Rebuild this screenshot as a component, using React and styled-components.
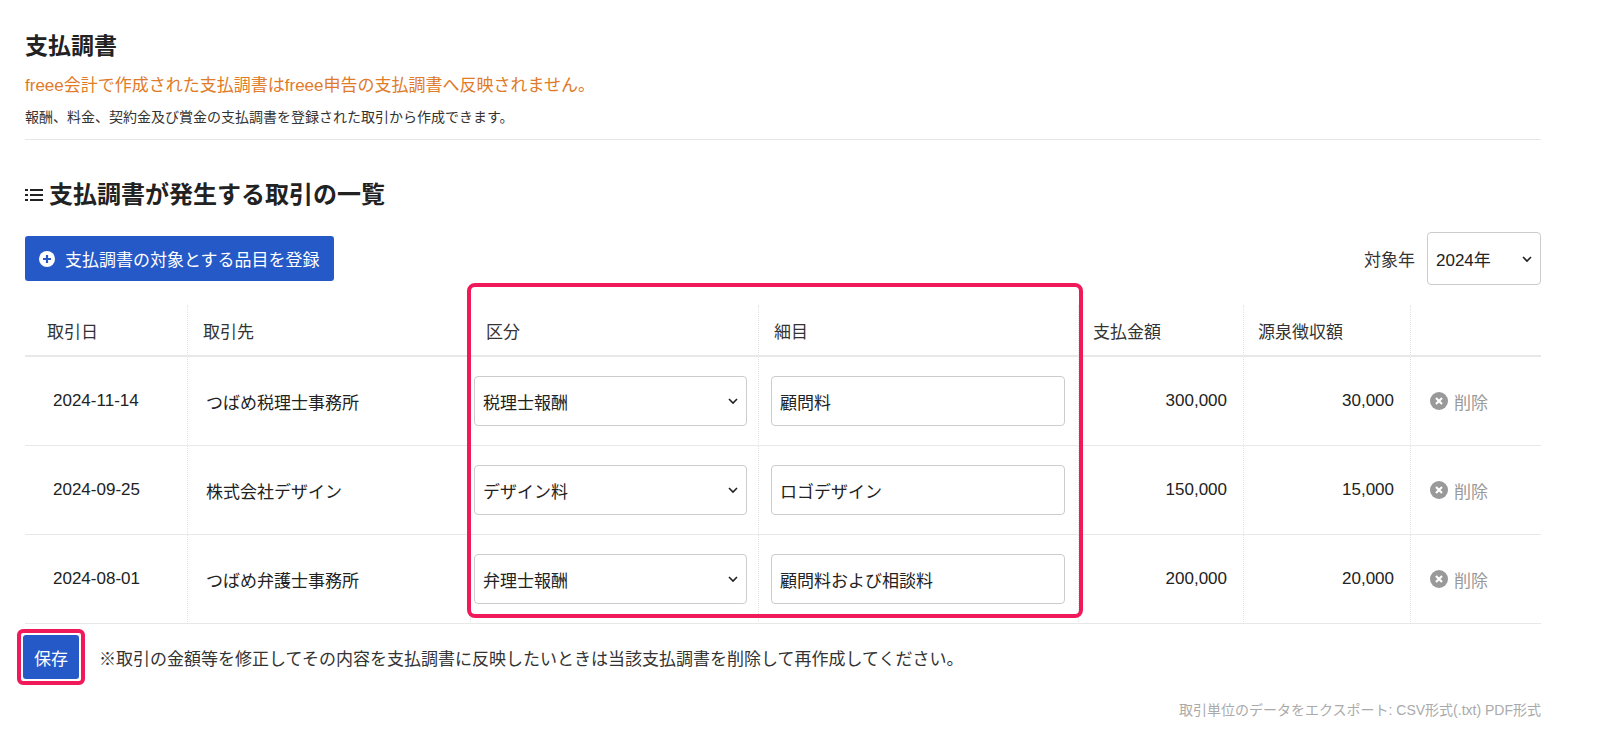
import React from "react";
import styled, { createGlobalStyle } from "styled-components";

const G = createGlobalStyle`
  html,body{overflow:hidden;}
  body{margin:0;background:#fff;font-family:"Liberation Sans","Noto Sans CJK JP",sans-serif;color:#333;}
`;
const Page = styled.div`padding:30px 59px 0 25px;width:1600px;box-sizing:border-box;position:relative;`;
const Title = styled.h1`margin:0 0 12px;font-size:23px;font-weight:700;color:#222;line-height:32px;`;
const Warn = styled.div`color:#e07b2a;font-size:17px;line-height:24px;`;
const Note = styled.div`font-size:14px;margin-top:9px;line-height:20px;color:#333;`;
const Hr = styled.div`border-top:1px solid #e6e6e6;margin-top:12px;`;
const H2 = styled.h2`margin:40px 0 0;font-size:24px;font-weight:700;color:#222;display:flex;align-items:center;gap:6px;line-height:30px;`;
const Toolbar = styled.div`display:flex;justify-content:space-between;align-items:center;margin-top:22px;`;
const Primary = styled.button`background:#2559c7;color:#fff;border:none;border-radius:3px;font:inherit;font-size:17px;display:flex;align-items:center;gap:10px;padding:0 14px;height:45px;`;
const YearBox = styled.div`display:flex;align-items:center;gap:12px;font-size:17px;`;
const Select = styled.div`border:1px solid #ccc;border-radius:4px;display:flex;align-items:center;justify-content:space-between;padding:0 6px 0 8px;height:${p=>p.h||50}px;width:${p=>p.w}px;box-sizing:border-box;font-size:17px;color:#222;background:#fff;`;
const Table = styled.div`display:grid;grid-template-columns:162px 283px 288px 320px 165px 167px 131px;margin-top:20px;`;
const Th = styled.div`height:50px;display:flex;align-items:center;padding-left:${p=>p.pl||15}px;border-bottom:2px solid #e8e8e8;border-left:${p=>p.first?"none":"1px dotted #e2e2e2"};font-size:17px;color:#333;`;
const Td = styled.div`height:88px;display:flex;align-items:center;padding:0 ${p=>p.pr||10}px 0 ${p=>p.pl||12}px;justify-content:${p=>p.right?"flex-end":"flex-start"};border-bottom:1px solid #e8e8e8;border-left:${p=>p.first?"none":"1px dotted #e2e2e2"};font-size:17px;color:#222;`;
const Input = styled.div`border:1px solid #ccc;border-radius:4px;height:50px;width:100%;display:flex;align-items:center;padding:0 8px;box-sizing:border-box;font-size:17px;`;
const Del = styled.span`color:#999;display:flex;align-items:center;gap:6px;font-size:17px;`;
const Footer = styled.div`display:flex;align-items:center;gap:14px;margin-top:5px;`;
const SaveWrap = styled.div`border:4px solid #f0195a;border-radius:6px;padding:2px;margin-left:-8px;`;
const Save = styled.button`background:#2559c7;color:#fff;border:none;border-radius:3px;font:inherit;font-size:17px;padding:0 11px;height:44px;`;
const Export = styled.div`text-align:right;color:#aaa;font-size:14px;margin-top:14px;`;
const Highlight = styled.div`position:absolute;left:467px;top:283px;width:616px;height:335px;border:4px solid #f0195a;border-radius:8px;box-sizing:border-box;pointer-events:none;`;

const Chev = () => <svg width="14" height="14" viewBox="0 0 14 14"><path d="M3 5l4 4 4-4" stroke="#222" strokeWidth="1.6" fill="none"/></svg>;
const rows = [
  ["2024-11-14","つばめ税理士事務所","税理士報酬","顧問料","300,000","30,000"],
  ["2024-09-25","株式会社デザイン","デザイン料","ロゴデザイン","150,000","15,000"],
  ["2024-08-01","つばめ弁護士事務所","弁理士報酬","顧問料および相談料","200,000","20,000"],
];

export default function App(){
  return <Page>
    <G/>
    <Title>支払調書</Title>
    <Warn>freee会計で作成された支払調書はfreee申告の支払調書へ反映されません。</Warn>
    <Note>報酬、料金、契約金及び賞金の支払調書を登録された取引から作成できます。</Note>
    <Hr/>
    <H2><svg width="18" height="16" viewBox="0 0 18 16"><g fill="#222"><rect x="0" y="2" width="3" height="2"/><rect x="5" y="2" width="13" height="2"/><rect x="0" y="7" width="3" height="2"/><rect x="5" y="7" width="13" height="2"/><rect x="0" y="12" width="3" height="2"/><rect x="5" y="12" width="13" height="2"/></g></svg>支払調書が発生する取引の一覧</H2>
    <Toolbar>
      <Primary><svg width="16" height="16" viewBox="0 0 16 16"><circle cx="8" cy="8" r="8" fill="#fff"/><path d="M8 4v8M4 8h8" stroke="#2559c7" strokeWidth="2.2"/></svg>支払調書の対象とする品目を登録</Primary>
      <YearBox>対象年<Select w={114} h={53}>2024年<Chev/></Select></YearBox>
    </Toolbar>
    <Table>
      <Th first pl={22}>取引日</Th><Th>取引先</Th><Th>区分</Th><Th>細目</Th><Th pl={14}>支払金額</Th><Th pl={14}>源泉徴収額</Th><Th/>
      {rows.map(r=><React.Fragment key={r[0]}>
        <Td first pl={28}>{r[0]}</Td>
        <Td pl={18}>{r[1]}</Td>
        <Td pl={3} pr={11}><Select w={277}>{r[2]}<Chev/></Select></Td>
        <Td pl={12} pr={13}><Input>{r[3]}</Input></Td>
        <Td right pr={16}>{r[4]}</Td>
        <Td right pr={16}>{r[5]}</Td>
        <Td pl={19}><Del><svg width="18" height="18" viewBox="0 0 18 18"><circle cx="9" cy="9" r="9" fill="#999"/><path d="M6 6l6 6M12 6l-6 6" stroke="#fff" strokeWidth="2.2"/></svg>削除</Del></Td>
      </React.Fragment>)}
    </Table>
    <Footer>
      <SaveWrap><Save>保存</Save></SaveWrap>
      <span style={{fontSize:17}}>※取引の金額等を修正してその内容を支払調書に反映したいときは当該支払調書を削除して再作成してください。</span>
    </Footer>
    <Export>取引単位のデータをエクスポート: CSV形式(.txt) PDF形式</Export>
    <Highlight/>
  </Page>;
}
